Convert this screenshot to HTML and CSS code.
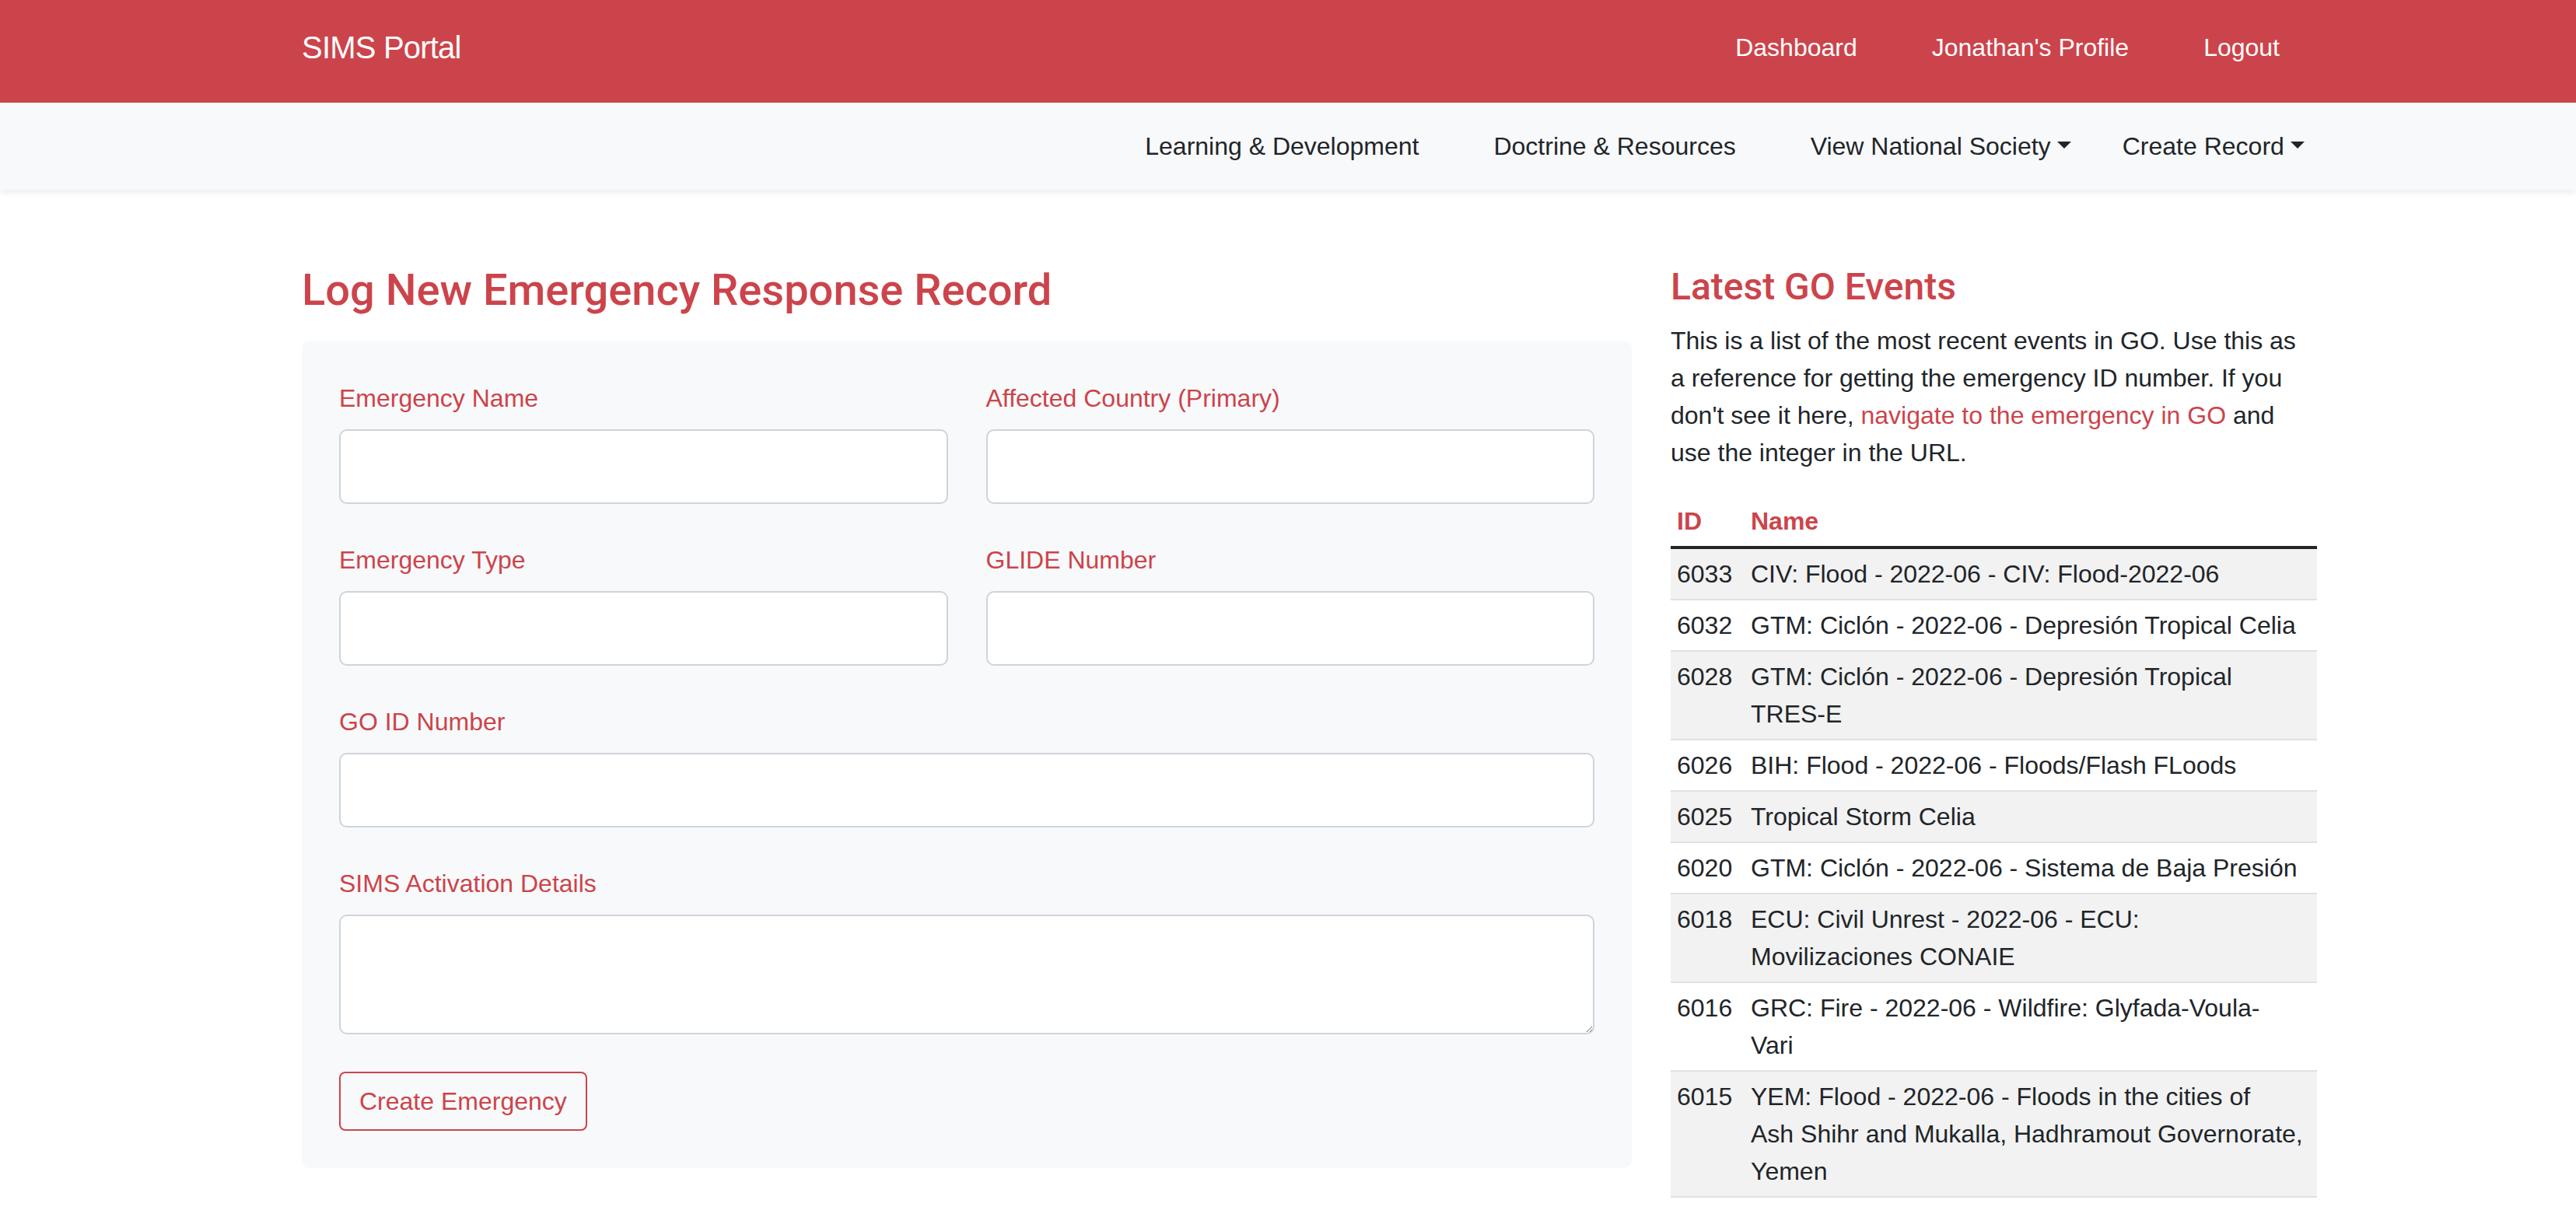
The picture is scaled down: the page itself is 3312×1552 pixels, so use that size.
FILE: index.html
```html
<!DOCTYPE html>
<html lang="en">
<head>
<meta charset="utf-8">
<title>SIMS Portal - Log New Emergency</title>
<link rel="stylesheet" href="styles.css">
</head>
<body>
<header class="topbar">
  <div class="container topbar-inner">
    <a class="brand" href="#">SIMS Portal</a>
    <nav class="top-links">
      <a href="#">Dashboard</a>
      <a href="#">Jonathan's Profile</a>
      <a href="#">Logout</a>
    </nav>
  </div>
</header>
<div class="subbar">
  <div class="container subbar-inner">
    <a class="sub-link spaced" href="#">Learning &amp; Development</a>
    <a class="sub-link spaced" href="#">Doctrine &amp; Resources</a>
    <a class="sub-link toggle near" href="#">View National Society</a>
    <a class="sub-link toggle" href="#">Create Record</a>
  </div>
</div>
<main class="container main-grid">
  <section class="form-col">
    <h3 class="page-title">Log New Emergency Response Record</h3>
    <form class="form-card">
      <div class="form-grid">
        <div class="field">
          <label class="field-label" for="name">Emergency Name</label>
          <input class="control" id="name" type="text">
        </div>
        <div class="field">
          <label class="field-label" for="country">Affected Country (Primary)</label>
          <input class="control" id="country" type="text">
        </div>
        <div class="field">
          <label class="field-label" for="type">Emergency Type</label>
          <input class="control" id="type" type="text">
        </div>
        <div class="field">
          <label class="field-label" for="glide">GLIDE Number</label>
          <input class="control" id="glide" type="text">
        </div>
        <div class="field wide">
          <label class="field-label" for="goid">GO ID Number</label>
          <input class="control" id="goid" type="text">
        </div>
        <div class="field wide">
          <label class="field-label" for="details">SIMS Activation Details</label>
          <textarea class="control area" id="details" rows="2"></textarea>
        </div>
        <div class="wide">
          <button class="btn-outline" type="button">Create Emergency</button>
        </div>
      </div>
    </form>
  </section>
  <aside class="events-col">
    <h4 class="side-title">Latest GO Events</h4>
    <p class="intro">This is a list of the most recent events in GO. Use this as a reference for getting the emergency ID number. If you don't see it here, <a class="red-link" href="#">navigate to the emergency in GO</a> and use the integer in the URL.</p>
    <table class="events">
      <thead>
        <tr><th class="col-id">ID</th><th>Name</th></tr>
      </thead>
      <tbody>
        <tr><td>6033</td><td>CIV: Flood - 2022-06 - CIV: Flood-2022-06</td></tr>
        <tr><td>6032</td><td>GTM: Ciclón - 2022-06 - Depresión Tropical Celia</td></tr>
        <tr><td>6028</td><td>GTM: Ciclón - 2022-06 - Depresión Tropical<br>TRES-E</td></tr>
        <tr><td>6026</td><td>BIH: Flood - 2022-06 - Floods/Flash FLoods</td></tr>
        <tr><td>6025</td><td>Tropical Storm Celia</td></tr>
        <tr><td>6020</td><td>GTM: Ciclón - 2022-06 - Sistema de Baja Presión</td></tr>
        <tr><td>6018</td><td>ECU: Civil Unrest - 2022-06 - ECU:<br>Movilizaciones CONAIE</td></tr>
        <tr><td>6016</td><td>GRC: Fire - 2022-06 - Wildfire: Glyfada-Voula-<br>Vari</td></tr>
        <tr><td>6015</td><td>YEM: Flood - 2022-06 - Floods in the cities of<br>Ash Shihr and Mukalla, Hadhramout Governorate,<br>Yemen</td></tr>
      </tbody>
    </table>
  </aside>
</main>
</body>
</html>
```
FILE: styles.css
```css
* { box-sizing: border-box; }

html, body {
  margin: 0;
  padding: 0;
  background: #ffffff;
}

body {
  font-family: "Liberation Sans", Arial, sans-serif;
  font-size: 32px;
  line-height: 1.5;
  color: #212529;
}

a { text-decoration: none; }

.container {
  width: 2591px;
  margin-left: 388px;
}

/* ---------- top bar ---------- */
.topbar {
  background: #cc444b;
  height: 132px;
}

.topbar-inner {
  height: 122px;
  display: flex;
  align-items: center;
  justify-content: space-between;
}

.brand {
  color: #ffffff;
  font-size: 40px;
  line-height: 60px;
  letter-spacing: -0.8px;
}

.top-links {
  display: flex;
  align-items: center;
}

.top-links a {
  color: #ffffff;
  padding: 0 48px;
  line-height: 48px;
}

/* ---------- secondary bar ---------- */
.subbar {
  background: #f8f9fa;
  height: 112px;
  box-shadow: 0 4px 8px rgba(0, 0, 0, 0.075);
  position: relative;
}

.subbar-inner {
  height: 112px;
  display: flex;
  align-items: center;
  justify-content: flex-end;
}

.sub-link {
  color: #212529;
  padding: 0 16px;
  line-height: 48px;
}

.sub-link.spaced { margin-right: 64px; }
.sub-link.near { margin-right: 34px; }

.toggle::after {
  content: "";
  display: inline-block;
  margin-left: 0.255em;
  vertical-align: 0.255em;
  border-top: 0.3em solid #212529;
  border-right: 0.3em solid transparent;
  border-left: 0.3em solid transparent;
  border-bottom: 0;
}

/* ---------- main ---------- */
.main-grid {
  display: grid;
  grid-template-columns: 1710px 831px;
  column-gap: 50px;
  padding-top: 96px;
}

.page-title {
  font-family: Roboto, "Liberation Sans", sans-serif;
  font-weight: 500;
  font-size: 56px;
  line-height: 67.2px;
  color: #cc444b;
  margin: 0 0 31px;
}

.form-card {
  background: #f8f9fa;
  border-radius: 10px;
  padding: 50px 48px 48px;
}

.form-grid {
  display: grid;
  grid-template-columns: 1fr 1fr;
  column-gap: 49px;
  row-gap: 48px;
}

.wide { grid-column: 1 / span 2; }

.field-label {
  display: block;
  color: #cc444b;
  line-height: 48px;
  margin-bottom: 16px;
}

.control {
  display: block;
  width: 100%;
  height: 96px;
  padding: 16px 32px;
  font-family: inherit;
  font-size: 40px;
  color: #212529;
  background: #ffffff;
  border: 2px solid #ced4da;
  border-radius: 10px;
}

.control.area {
  height: 154px;
  resize: vertical;
}

.btn-outline {
  font-family: inherit;
  font-size: 32px;
  line-height: 48px;
  color: #cc444b;
  background: transparent;
  border: 2px solid #cc444b;
  border-radius: 8px;
  padding: 12px 24px;
  cursor: pointer;
}

/* ---------- side column ---------- */
.side-title {
  font-family: Roboto, "Liberation Sans", sans-serif;
  font-weight: 500;
  font-size: 48px;
  line-height: 57.6px;
  color: #cc444b;
  margin: 0 0 16px;
}

.intro {
  margin: 0 0 32px;
  padding-right: 12px;
}

.red-link { color: #cc444b; }

.events {
  width: 100%;
  border-collapse: separate;
  border-spacing: 0;
  vertical-align: top;
}

.events th,
.events td {
  padding: 8px;
  text-align: left;
  vertical-align: top;
  line-height: 48px;
  border-bottom: 2px solid #dee2e6;
}

.events thead th {
  color: #cc444b;
  font-weight: 700;
  border-bottom: 4px solid #212529;
}

.events .col-id { width: 95px; }

.events tbody tr:nth-child(odd) td { background: #f2f2f2; }
```
